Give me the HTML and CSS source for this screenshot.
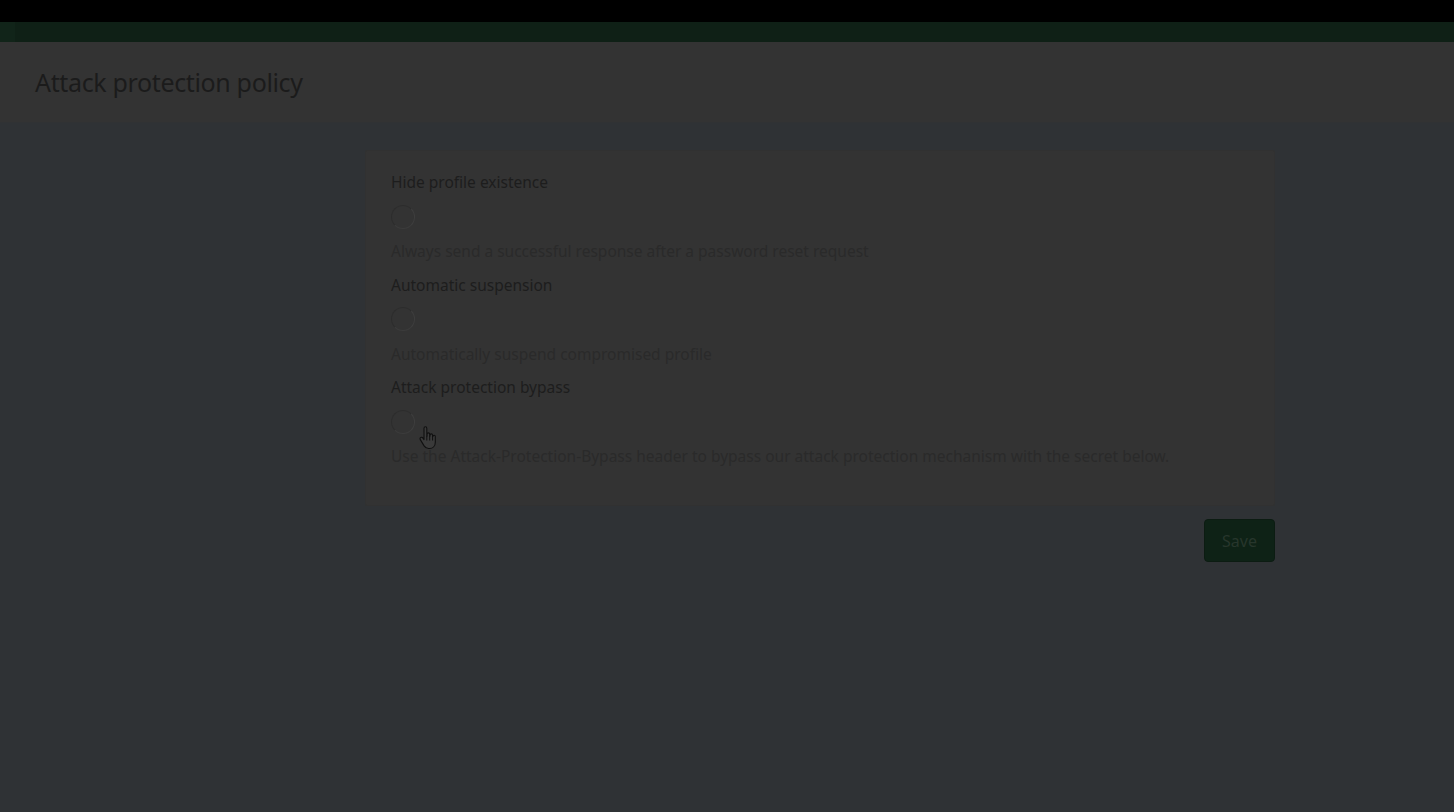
FILE: index.html
```html
<!DOCTYPE html>
<html>
<head>
<meta charset="utf-8">
<link rel="stylesheet" href="styles.css">
</head>
<body>
<div class="topbar"></div>
<div class="brandbar"><div class="brand-left"></div></div>
<header class="pagehead">
  <h1 class="title">Attack protection policy</h1>
</header>
<main class="content">
  <section class="card">
    <div class="setting">
      <div class="label">Hide profile existence</div>
      <div class="spin-row"><span class="spinner"></span></div>
      <div class="desc">Always send a successful response after a password reset request</div>
    </div>
    <div class="setting">
      <div class="label">Automatic suspension</div>
      <div class="spin-row"><span class="spinner"></span></div>
      <div class="desc">Automatically suspend compromised profile</div>
    </div>
    <div class="setting">
      <div class="label">Attack protection bypass</div>
      <div class="spin-row"><span class="spinner"></span>
        <svg class="cursor" width="18" height="24" viewBox="0 0 18 24">
          <path d="M5 2.2c0-.9.6-1.5 1.4-1.5S7.8 1.3 7.8 2.2V10h.3V8.3c0-.8.6-1.4 1.3-1.4s1.3.6 1.3 1.4V10h.3V9.2c0-.8.6-1.3 1.3-1.3s1.3.5 1.3 1.3v1.3h.3c0-.7.6-1.2 1.2-1.2.7 0 1.2.5 1.2 1.300v5.6c0 3.6-2.4 6.3-5.8 6.3H9.6c-2.1 0-3.4-.9-4.5-2.6L1.3 13.6c-.5-.8-.3-1.700.4-2.1.7-.5 1.6-.3 2.1.4L5 13.6z" fill="#3a3a3a" stroke="#101010" stroke-width="1.1" stroke-linejoin="round"/>
          <path d="M7.8 10v4.5M10.7 10v4.5M13.6 10.5v4" stroke="#101010" stroke-width="1" fill="none"/>
        </svg>
      </div>
      <div class="desc">Use the Attack-Protection-Bypass header to bypass our attack protection mechanism with the secret below.</div>
    </div>
  </section>
  <div class="actions">
    <button class="save">Save</button>
  </div>
</main>
</body>
</html>
```
FILE: styles.css
```css
html, body {
  margin: 0;
  padding: 0;
}
body {
  background: #2f3235;
  font-family: "Source Sans Pro", "Noto Sans", "Open Sans", sans-serif;
  height: 812px;
  overflow: hidden;
}
.topbar {
  height: 22px;
  background: #000000;
}
.brandbar {
  height: 20px;
  background: #0f2016;
  display: flex;
}
.brand-left {
  width: 15px;
  background: #112419;
}
.pagehead {
  height: 80px;
  background: #333333;
  border-bottom: 1px solid #303234;
  display: flex;
  align-items: center;
  padding-left: 35px;
}
.title {
  margin: 0;
  font-weight: 400;
  font-size: 25px;
  color: #1b1b1b;
  letter-spacing: -0.35px;
}
.content {
  width: 910px;
  margin: 27px 0 0 365px;
}
.card {
  background: #333333;
  border: 1px solid #313131;
  border-radius: 2px;
  padding: 20px 25px 30px 25px;
  height: 304px;
}
.setting {
  display: flex;
  flex-direction: column;
}
.label {
  font-size: 15.5px;
  color: #1d1d1d;
  height: 22px;
  line-height: 22px;
}
.spin-row {
  height: 47px;
  display: flex;
  align-items: center;
  position: relative;
}
.spinner {
  width: 24px;
  height: 24px;
  box-sizing: border-box;
  border-radius: 50%;
  border: 1.5px solid #2d2d2d;
  border-right-color: #3e3e3e;
  border-bottom-color: #3c3c3c;
  display: block;
}
.cursor {
  position: absolute;
  left: 28px;
  top: 28px;
}
.desc {
  font-size: 15.5px;
  color: #2a2a2a;
  height: 33.5px;
  line-height: 22px;
}
.actions {
  display: flex;
  justify-content: flex-end;
  margin-top: 13px;
}
.save {
  width: 71px;
  height: 43px;
  background: #0e2216;
  border: 1px solid #0c1c12;
  border-radius: 4px;
  color: #27362c;
  font-family: "Source Sans Pro", "Noto Sans", "Open Sans", sans-serif;
  font-size: 16px;
  padding: 0;
}
```
